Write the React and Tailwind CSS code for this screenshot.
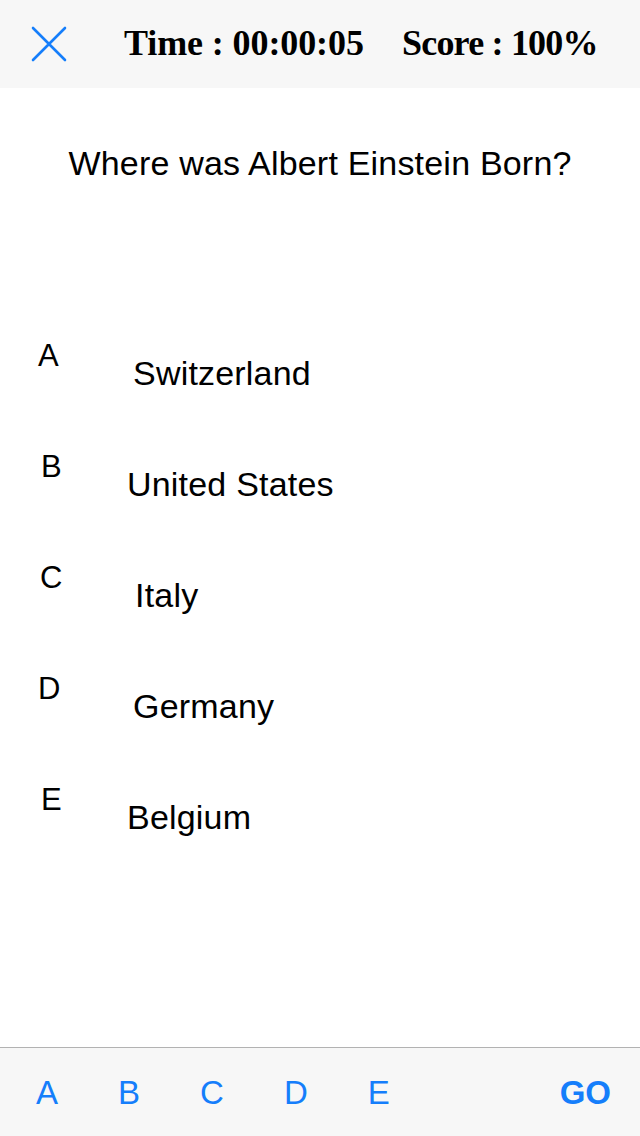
import React from "react";

const sans = { fontFamily: '"Liberation Sans", Arial, sans-serif' };
const serif = { fontFamily: '"Liberation Serif", "DejaVu Serif", serif' };

const options = [
  { l: "A", t: "Switzerland", lp: "pl-[38px]", tp: "pl-[33px]" },
  { l: "B", t: "United States", lp: "pl-[41px]", tp: "pl-[27px]" },
  { l: "C", t: "Italy", lp: "pl-[40px]", tp: "pl-[35px]" },
  { l: "D", t: "Germany", lp: "pl-[38px]", tp: "pl-[33px]" },
  { l: "E", t: "Belgium", lp: "pl-[41px]", tp: "pl-[27px]" },
];

export default function App() {
  return (
    <div className="w-[640px] h-[1136px] flex flex-col bg-white overflow-hidden" style={sans}>
      <header className="h-[88px] bg-[#f7f7f7] flex items-center shrink-0">
        <svg className="ml-[31px]" width="36" height="36" viewBox="0 0 36 36" fill="none" stroke="#157efb" strokeWidth="2.6" strokeLinecap="round">
          <path d="M2 2 L34 34 M34 2 L2 34" />
        </svg>
        <div className="ml-[57px] flex items-baseline text-black font-bold text-[36px] leading-none whitespace-nowrap pb-[2px]" style={serif}>
          <span className="w-[278px] tracking-[-0.1px]">Time : 00:00:05</span>
          <span className="tracking-[-0.8px]">Score : 100%</span>
        </div>
      </header>

      <div className="pt-[55px] text-center text-black text-[34px] leading-[40px] tracking-[0.2px]">
        Where was Albert Einstein Born?
      </div>

      <div className="mt-[154px] flex flex-col">
        {options.map((o) => (
          <div key={o.l} className="h-[111px] flex text-black">
            <div className={`${o.lp} w-[100px] pt-[2px] text-[31px] leading-[34px]`}>{o.l}</div>
            <div className={`${o.tp} pt-[16px] text-[34px] leading-[40px] tracking-[0.2px]`}>{o.t}</div>
          </div>
        ))}
      </div>

      <div className="flex-1" />

      <footer className="h-[89px] shrink-0 border-t border-[#b2b2b2] bg-[#f7f7f7] flex items-center text-[#157efb] text-[33px] leading-none">
        <span className="ml-[36px]">A</span>
        <span className="ml-[60px]">B</span>
        <span className="ml-[60px]">C</span>
        <span className="ml-[60px]">D</span>
        <span className="ml-[60px]">E</span>
        <span className="ml-auto mr-[29px] font-bold">GO</span>
      </footer>
    </div>
  );
}
